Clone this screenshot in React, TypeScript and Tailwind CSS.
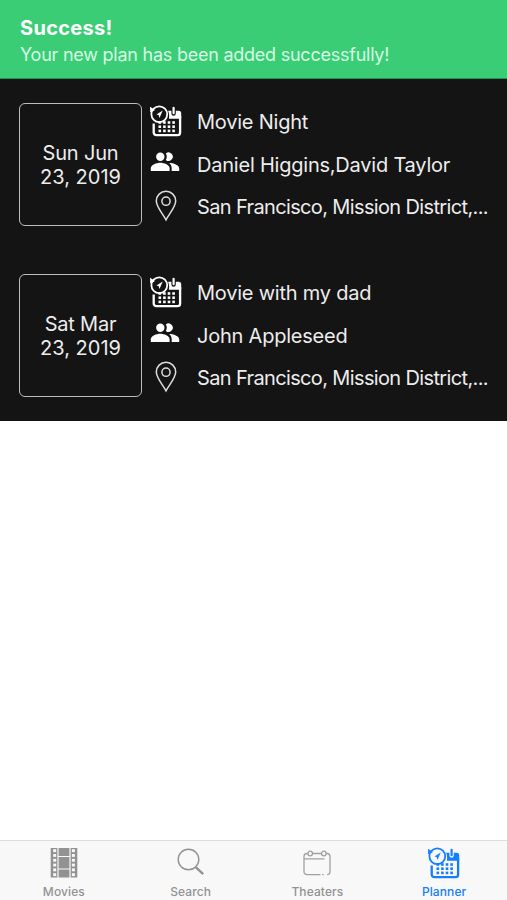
import React from "react";

type IconProps = { className?: string };

const dotColumns = [10.8, 15.4, 20, 24.6];
const dotRows = [17.2, 21.4, 25.6];

function PlannerIcon({ className }: IconProps) {
  return (
    <svg className={className} width="34" height="34" viewBox="0 0 34 34" fill="none" stroke="currentColor">
      <path d="M4.700 19.500V28.500a2.700 2.700 0 0 0 2.700 2.700h21a2.700 2.700 0 0 0 2.700-2.700V12" strokeWidth="2.300" />
      <path d="M19.900 14.800c.5-2.600.3-5-.8-8h3.300v2.800a2.200 2.200 0 0 0 4.400 0V6.800h2.900a2.500 2.500 0 0 1 2.500 2.500v5.500z" fill="currentColor" stroke="none" />
      <path d="M24.600 3.800v5.400" strokeWidth="2.200" strokeLinecap="round" />
      <circle cx="10.300" cy="10.300" r="7.900" strokeWidth="1.800" />
      <path d="M1 2.800l.2 5.600 4.900-2.500z" fill="currentColor" stroke="none" />
      <path d="M13.700 6.500l-3.200 7.500-.9-2.900-2.200-.6z" fill="currentColor" stroke="none" />
      {dotRows.map((y) =>
        dotColumns.map((x) => (
          <rect key={`${x}-${y}`} x={x - 1.300} y={y} width="2.600" height="2.600" fill="currentColor" stroke="none" />
        )),
      )}
    </svg>
  );
}

function PeopleIcon() {
  return (
    <svg width="30" height="20" viewBox="0 0 30 20" fill="currentColor">
      <circle cx="10.300" cy="4.700" r="4.200" />
      <path d="M.8 19v-2.700C.8 13 6.500 10.800 10.300 10.800S19.600 13 19.600 16.300V19z" />
      <path d="M15.800 1.500a4.200 4.200 0 1 1 0 6.400 6 6 0 0 0 0-6.400z" />
      <path d="M19.200 10.900c4.200 0 10 2 10 5.400V19h-7.500v-2.700c0-2.300-1-4-2.500-5.400z" />
    </svg>
  );
}

function PinIcon() {
  return (
    <svg width="22" height="32" viewBox="0 0 22 32" fill="none" stroke="#dedede" strokeWidth="1.500">
      <path d="M11 29.800C8 24 1.300 17 1.300 11a9.700 9.700 0 0 1 19.400 0c0 6-6.700 13-9.700 18.800z" />
      <circle cx="11" cy="11.200" r="4.100" />
    </svg>
  );
}

const holes = [1.200, 6, 10.800, 15.600, 20.400, 25.200];

function FilmIcon() {
  return (
    <svg width="28" height="30" viewBox="0 0 28 30">
      <rect x="0.700" width="26.600" height="29.500" fill="#929292" />
      <path d="M8 0v30M20 0v30M8 8.500h12M8 21h12" stroke="#f8f8f8" strokeWidth="1.200" />
      {holes.map((y) => (
        <g key={y} fill="#f8f8f8">
          <rect x="3.200" y={y} width="3" height="2.900" />
          <rect x="21.900" y={y} width="3" height="2.900" />
        </g>
      ))}
    </svg>
  );
}

function SearchIcon() {
  return (
    <svg width="28" height="30" viewBox="0 0 28 30" fill="none" stroke="#929292">
      <circle cx="11.500" cy="11.500" r="10.300" strokeWidth="1.400" />
      <path d="M18.500 19l2 1.800" strokeWidth="1.200" />
      <path d="M19.200 19.700l7 6.500" strokeWidth="2.400" />
    </svg>
  );
}

function TheaterIcon() {
  return (
    <svg width="28" height="30" viewBox="0 0 28 30" fill="none" stroke="#a0a0a0" strokeWidth="1.300">
      <path d="M17.500 26.700H4a3 3 0 0 1-3-3V8.500a3 3 0 0 1 3-3h1M9.500 5.500h9M23 5.500h1a3 3 0 0 1 3 3v15.200a3 3 0 0 1-2.800 3M1 10.800h20.500M19.300 26.700h1.500" />
      <circle cx="7.200" cy="5.500" r="2.300" />
      <circle cx="20.800" cy="5.500" r="2.300" />
    </svg>
  );
}

const plans = [
  { day: "Sun Jun", rest: "23, 2019", title: "Movie Night", people: "Daniel Higgins,David Taylor" },
  { day: "Sat Mar", rest: "23, 2019", title: "Movie with my dad", people: "John Appleseed" },
];

const tabs = [
  { label: "Movies", icon: <FilmIcon />, tone: "text-[#929292]" },
  { label: "Search", icon: <SearchIcon />, tone: "text-[#929292]" },
  { label: "Theaters", icon: <TheaterIcon />, tone: "text-[#929292]" },
  { label: "Planner", icon: <PlannerIcon />, tone: "text-[#157efb]" },
];

export default function App() {
  return (
    <div className="flex h-[900px] w-[507px] flex-col overflow-hidden bg-white font-['Inter',sans-serif]">
      <header className="h-[79px] shrink-0 border-b border-[#249250] bg-[#3acd76] px-5 pt-[15px]">
        <h1 className="text-[20px] leading-[26px] font-bold tracking-[0.3px] text-white">Success!</h1>
        <p className="text-[18px] leading-[27px] tracking-[-0.24px] whitespace-nowrap text-[#d5fbe3]">Your new plan has been added successfully!</p>
      </header>
      <main className="shrink-0 bg-[#141414] text-[#ededed]">
        {plans.map((plan) => (
          <article key={plan.title} className="flex h-[171px] pt-6 pl-[19px]">
            <div className="flex h-[123px] w-[123px] shrink-0 flex-col items-center justify-center rounded-[6px] border border-[#bdbdbd] text-[20px] leading-[24px]">
              <span className="tracking-[-0.2px]">{plan.day}</span>
              <span>{plan.rest}</span>
            </div>
            <div className="ml-[5px] flex w-[36px] shrink-0 flex-col items-center text-white">
              <div className="flex h-[36px] items-center pl-[2px]"><PlannerIcon /></div>
              <div className="flex h-[45px] items-center"><PeopleIcon /></div>
              <div className="flex h-[44px] items-center pl-px"><PinIcon /></div>
            </div>
            <div className="ml-[14px] w-[300px] pt-px text-[20px] tracking-[-0.22px] whitespace-nowrap">
              <p className="h-[42.500px] leading-[36px]">{plan.title}</p>
              <p className="h-[42.500px] leading-[36px]">{plan.people}</p>
              <p className="leading-[36px] tracking-[-0.64px]">San Francisco, Mission District,...</p>
            </div>
          </article>
        ))}
      </main>
      <div className="flex-1" />
      <nav className="grid h-[60px] shrink-0 grid-cols-4 border-t border-[#dddddd] bg-[#f8f8f8]">
        {tabs.map((tab) => (
          <div key={tab.label} className={`flex flex-col items-center pt-[4px] pl-px ${tab.tone}`}>
            <div className="flex h-[36px] items-center">{tab.icon}</div>
            <span className="mt-[3px] text-[12px] leading-[16px] font-medium tracking-[0.1px]">{tab.label}</span>
          </div>
        ))}
      </nav>
    </div>
  );
}
